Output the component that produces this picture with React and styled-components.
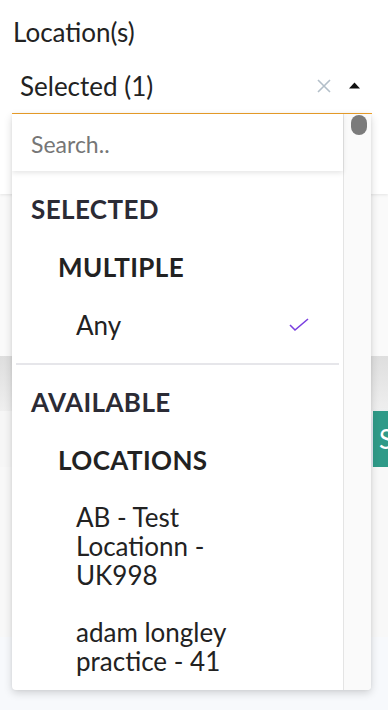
import React from "react";
import styled, { createGlobalStyle } from "styled-components";

const GlobalStyle = createGlobalStyle`
  html, body { margin: 0; padding: 0; background: #ffffff; }
  body { font-family: "Lato", "Open Sans", sans-serif; color: #222; }
  * { box-sizing: border-box; }
`;

const Page = styled.div`
  width: 388px;
  height: 710px;
  overflow: hidden;
  display: flex;
  flex-direction: column;
  background: #f7f9fc;
`;

const Header = styled.div`
  background: #fff;
  padding: 18px 16px 80px 12px;
  box-shadow: 0 1px 3px rgba(0, 0, 0, 0.09);
  position: relative;
  z-index: 2;
`;

const Label = styled.div`
  font-size: 26px;
  line-height: 28px;
  color: #222;
  padding-left: 1px;
`;

const Control = styled.div`
  position: relative;
  margin-top: 12px;
  height: 56px;
  border-bottom: 1px solid #f0a22a;
  display: flex;
  align-items: center;
  padding: 0 12px 0 8px;
`;

const Value = styled.div`
  flex: 1;
  font-size: 26px;
  color: #222;
`;

const IconBtn = styled.span`
  display: inline-flex;
  align-items: center;
  justify-content: center;
  margin-left: ${(p) => p.$gap || 0}px;
`;

const Menu = styled.div`
  position: absolute;
  top: calc(100% + 1px);
  left: 0;
  right: 1px;
  height: 576px;
  background: #fff;
  border-radius: 0 0 4px 4px;
  box-shadow: 0 3px 9px rgba(0, 0, 0, 0.16), 0 0 3px rgba(0, 0, 0, 0.06);
  display: flex;
  overflow: hidden;
`;

const ListArea = styled.div`
  flex: 1;
  display: flex;
  flex-direction: column;
  min-width: 0;
`;

const SearchBox = styled.div`
  height: 63px;
  display: flex;
  align-items: center;
  padding: 2px 0 0 19px;
  font-size: 23px;
  color: #767676;
  background: #fff;
  box-shadow: 0 2px 5px rgba(0, 0, 0, 0.1);
  position: relative;
  z-index: 1;
`;

const List = styled.div`
  padding-top: 9px;
  display: flex;
  flex-direction: column;
`;

const Row = styled.div`
  min-height: 58px;
  display: flex;
  align-items: center;
  padding: 14px 34px 14px ${(p) => p.$indent}px;
  font-size: 26px;
  letter-spacing: ${(p) => (p.$head ? 0.4 : 0)}px;
  line-height: 29px;
  font-weight: ${(p) => (p.$head ? 700 : 400)};
  color: ${(p) => p.$color || "#222"};
  text-transform: ${(p) => (p.$head ? "uppercase" : "none")};
`;

const ItemText = styled.span`
  flex: 1;
  max-width: ${(p) => p.$max || 9999}px;
`;

const Divider = styled.div`
  height: 2px;
  background: #e6e6ea;
  margin: 9px 4px 8px;
`;

const Track = styled.div`
  width: 28px;
  background: #fafafa;
  border-left: 1px solid #e4e4e4;
  padding: 1px 0 0 7px;
`;

const Thumb = styled.div`
  width: 16px;
  height: 20px;
  border-radius: 8px;
  background: #7b7b7b;
`;

const Panel = styled.div`
  height: 162px;
  background: #fafafa;
`;

const GreyBar = styled.div`
  height: 55px;
  background: linear-gradient(#dedede, #efefef);
`;

const ButtonRow = styled.div`
  height: 56px;
  display: flex;
  justify-content: flex-start;
  padding-left: 373px;
  background: #f6f6f6;
`;

const TealButton = styled.div`
  width: 120px;
  background: #2f9a88;
  color: #fff;
  font-size: 26px;
  display: flex;
  align-items: center;
  padding-left: 6px;
  box-shadow: 0 6px 8px rgba(120, 170, 230, 0.35);
`;

const Lower = styled.div`
  height: 170px;
  background: #f8f8f8;
`;

const Check = () => (
  <svg width="20" height="14" viewBox="0 0 20 14">
    <polyline points="1,7 6,12 19,1" fill="none" stroke="#7a3fe0" strokeWidth="1.6" />
  </svg>
);

export default function App() {
  return (
    <Page>
      <GlobalStyle />
      <Header>
        <Label>Location(s)</Label>
        <Control>
          <Value>Selected (1)</Value>
          <IconBtn>
            <svg width="14" height="14" viewBox="0 0 14 14">
              <path d="M1 1L13 13M13 1L1 13" stroke="#b3bfc9" strokeWidth="1.6" />
            </svg>
          </IconBtn>
          <IconBtn $gap={18}>
            <svg width="11" height="7" viewBox="0 0 11 7">
              <path d="M0 6.5L5.5 0.5L11 6.5Z" fill="#111" />
            </svg>
          </IconBtn>
          <Menu>
            <ListArea>
              <SearchBox>Search..</SearchBox>
              <List>
                <Row $head $indent={19} $color="#2b2b35">Selected</Row>
                <Row $head $indent={46}>Multiple</Row>
                <Row $indent={64}>
                  <ItemText>Any</ItemText>
                  <Check />
                </Row>
                <Divider />
                <Row $head $indent={19} $color="#2b2b35">Available</Row>
                <Row $head $indent={46}>Locations</Row>
                <Row $indent={64}>
                  <ItemText $max={190}>AB - Test Locationn - UK998</ItemText>
                </Row>
                <Row $indent={64}>
                  <ItemText $max={190}>adam longley practice - 41</ItemText>
                </Row>
              </List>
            </ListArea>
            <Track>
              <Thumb />
            </Track>
          </Menu>
        </Control>
      </Header>
      <Panel />
      <GreyBar />
      <ButtonRow>
        <TealButton>S</TealButton>
      </ButtonRow>
      <Lower />
    </Page>
  );
}
